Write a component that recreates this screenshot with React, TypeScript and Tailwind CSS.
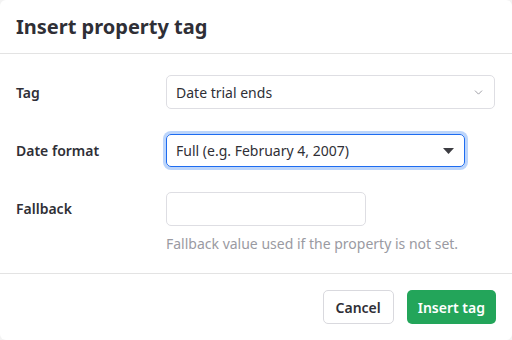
import { ChevronDown } from 'lucide-react';

export default function App() {
    return (
        <div className="w-[512px] h-[340px] bg-[#f3f3f3] font-['Noto_Sans',sans-serif] text-[#2f2f36]">
            <div className="w-full h-full bg-white rounded-md flex flex-col">
                <div className="h-[54px] px-4 flex items-center border-b border-[#e3e3e3]">
                    <h1 className="text-[20px] font-bold leading-none">Insert property tag</h1>
                </div>

                <div className="flex-1 px-4 pt-[21px] flex flex-col gap-[25px] border-b border-[#e3e3e3]">
                    <div className="flex items-center">
                        <label className="w-[150px] text-[14px] font-semibold">Tag</label>
                        <div className="w-[329px] h-[34px] border border-[#dedee3] rounded-[5px] flex items-center justify-between pl-[9px] pr-[9px] text-[14px]">
                            <span>Date trial ends</span>
                            <ChevronDown className="w-[13px] h-[13px] text-[#8a8a93]" strokeWidth={1.5} />
                        </div>
                    </div>

                    <div className="flex items-center">
                        <label className="w-[150px] text-[14px] font-semibold">Date format</label>
                        <div className="w-[299px] h-[33px] border border-[#1e6cf0] rounded-[5px] ring-[3px] ring-[#bcd5fb] flex items-center justify-between pl-[9px] pr-[10px] text-[14px]">
                            <span>Full (e.g. February 4, 2007)</span>
                            <svg width="11" height="6" viewBox="0 0 11 6">
                                <path d="M0 0h11L5.5 6z" fill="#3d3d42" />
                            </svg>
                        </div>
                    </div>

                    <div className="flex items-start">
                        <label className="w-[150px] text-[14px] font-semibold leading-[33px]">Fallback</label>
                        <div className="flex flex-col gap-[11px]">
                            <div className="w-[200px] h-[34px] border border-[#dedee3] rounded-[5px]" />
                            <p className="text-[14px] text-[#9a9aa2] leading-none">Fallback value used if the property is not set.</p>
                        </div>
                    </div>
                </div>

                <div className="h-[66px] px-4 flex items-center justify-end gap-[13px]">
                    <button className="h-[34px] px-[12px] border border-[#d9d9de] rounded-[5px] text-[14px] font-semibold text-[#2f2f36]">Cancel</button>
                    <button className="h-[34px] px-[11px] rounded-[5px] bg-[#23a55a] text-white text-[14px] font-semibold">Insert tag</button>
                </div>
            </div>
        </div>
    );
}
